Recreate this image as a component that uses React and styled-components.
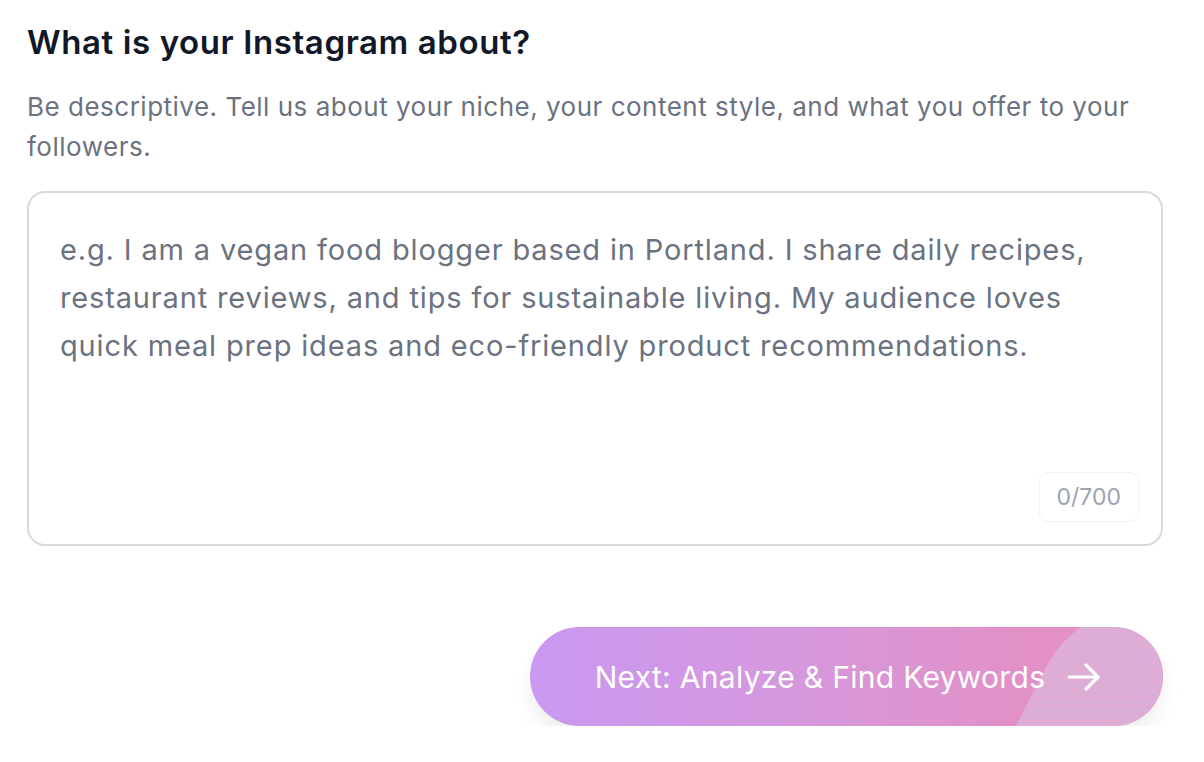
import React from "react";
import styled, { createGlobalStyle } from "styled-components";

const Global = createGlobalStyle`
  html, body { margin: 0; padding: 0; background: #ffffff; }
  body { font-family: Inter, "Noto Sans", sans-serif; -webkit-font-smoothing: antialiased; }
  * { box-sizing: border-box; }
`;

const Page = styled.div`
  width: 1204px;
  padding: 22px 41px 0 27px;
  display: flex;
  flex-direction: column;
`;

const Title = styled.h2`
  margin: 0;
  font-size: 33px;
  line-height: 40px;
  font-weight: 600;
  color: #111827;
  letter-spacing: 0.6px;
`;

const Subtitle = styled.p`
  margin: 25px 0 0;
  font-size: 26px;
  line-height: 40px;
  color: #6b7280;
  letter-spacing: 0.5px;
`;

const Field = styled.div`
  position: relative;
  margin-top: 24px;
  height: 355px;
  border: 2px solid #d8d9de;
  border-radius: 18px;
  background: #fff;
`;

const TextArea = styled.textarea`
  display: block;
  width: 100%;
  height: 100%;
  border: none;
  outline: none;
  resize: none;
  background: transparent;
  padding: 33px 28px 24px 31px;
  font-family: inherit;
  font-size: 29px;
  line-height: 48px;
  color: #374151;
  letter-spacing: 0.85px;
  &::placeholder { color: #6b7280; }
`;

const Counter = styled.span`
  position: absolute;
  right: 22px;
  bottom: 22px;
  padding: 0 17px;
  height: 50px;
  display: flex;
  align-items: center;
  border: 1.5px solid #f1f2f4;
  border-radius: 9px;
  font-size: 23px;
  color: #9ca3af;
  background: #fff;
`;

const Actions = styled.div`
  display: flex;
  justify-content: flex-end;
  margin-top: 81px;
`;

const NextButton = styled.button`
  position: relative;
  overflow: hidden;
  width: 633px;
  height: 99px;
  border: none;
  border-radius: 50px;
  background: linear-gradient(90deg, #c998f1 0%, #d598de 40%, #e191c8 75%, #e98fbd 100%);
  color: #fff;
  font-family: inherit;
  font-size: 30px;
  letter-spacing: 0.3px;
  display: flex;
  align-items: center;
  justify-content: center;
  gap: 22px;
  padding-left: 8px;
  box-shadow: 0 12px 20px rgba(0, 0, 0, 0.07);
  cursor: pointer;
`;

const Shine = styled.span`
  position: absolute;
  left: 486px;
  bottom: 0;
  width: 260px;
  height: 120px;
  background-color: #e2aad6;
  background-image: repeating-conic-gradient(#eea4d6 0 25%, #d3b2d4 0 50%);
  background-size: 2px 2px;
  transform: skewX(-27deg);
  transform-origin: bottom left;
  border-top-left-radius: 60px;
`;

const Label = styled.span`
  position: relative;
  z-index: 1;
`;

const Arrow = styled.svg`
  position: relative;
  z-index: 1;
  width: 33px;
  height: 28px;
`;

export default function App() {
  return (
    <>
      <Global />
      <Page>
        <Title>What is your Instagram about?</Title>
        <Subtitle>
          Be descriptive. Tell us about your niche, your content style, and what you offer to your followers.
        </Subtitle>
        <Field>
          <TextArea placeholder="e.g. I am a vegan food blogger based in Portland. I share daily recipes, restaurant reviews, and tips for sustainable living. My audience loves quick meal prep ideas and eco-friendly product recommendations." />
          <Counter>0/700</Counter>
        </Field>
        <Actions>
          <NextButton>
            <Shine />
            <Label>Next: Analyze &amp; Find Keywords</Label>
            <Arrow viewBox="0 0 33 28" fill="none" stroke="#fff" strokeWidth="3.2" strokeLinecap="round" strokeLinejoin="round">
              <path d="M2 14H31" />
              <path d="M19 2L31 14L19 26" />
            </Arrow>
          </NextButton>
        </Actions>
      </Page>
    </>
  );
}
